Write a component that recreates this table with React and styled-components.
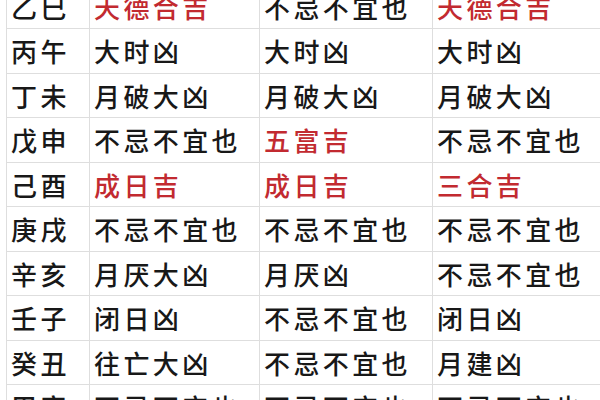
import React from "react";
import styled, { createGlobalStyle } from "styled-components";

const Global = createGlobalStyle`
  html, body {
    margin: 0;
    padding: 0;
    background: #ffffff;
    overflow: hidden;
  }
`;

const Page = styled.div`
  width: 600px;
  height: 400px;
  overflow: hidden;
  background: #fff;
`;

const Grid = styled.div`
  display: grid;
  grid-template-columns: 84px 170px 173px 190px;
  grid-auto-rows: 44.5px;
  margin-top: -15.5px;
  margin-left: 6px;
  font-family: "Noto Sans CJK SC", "Noto Sans", sans-serif;
`;

const Cell = styled.div`
  box-sizing: border-box;
  display: flex;
  align-items: center;
  padding-left: ${(p) => (p.$first ? "4px" : "4px")};
  border-right: 1px solid #dedede;
  border-bottom: 1px solid #dedede;
  border-left: ${(p) => (p.$first ? "1px solid #dedede" : "none")};
  font-size: 26px;
  font-weight: 500;
  letter-spacing: 3.4px;
  white-space: nowrap;
  color: ${(p) => (p.$red ? "#c22a30" : "#181818")};
`;

const R = (t) => ({ t, red: true });

const rows = [
  ["乙巳", R("天德合吉"), "不忌不宜也", R("天德合吉")],
  ["丙午", "大时凶", "大时凶", "大时凶"],
  ["丁未", "月破大凶", "月破大凶", "月破大凶"],
  ["戊申", "不忌不宜也", R("五富吉"), "不忌不宜也"],
  ["己酉", R("成日吉"), R("成日吉"), R("三合吉")],
  ["庚戌", "不忌不宜也", "不忌不宜也", "不忌不宜也"],
  ["辛亥", "月厌大凶", "月厌凶", "不忌不宜也"],
  ["壬子", "闭日凶", "不忌不宜也", "闭日凶"],
  ["癸丑", "往亡大凶", "不忌不宜也", "月建凶"],
  ["甲寅", "不忌不宜也", "不忌不宜也", "不忌不宜也"],
];

export default function App() {
  return (
    <Page>
      <Global />
      <Grid>
        {rows.map((row, i) =>
          row.map((c, j) => {
            const text = typeof c === "string" ? c : c.t;
            const red = typeof c !== "string";
            return (
              <Cell key={`${i}-${j}`} $first={j === 0} $red={red}>
                {text}
              </Cell>
            );
          })
        )}
      </Grid>
    </Page>
  );
}
